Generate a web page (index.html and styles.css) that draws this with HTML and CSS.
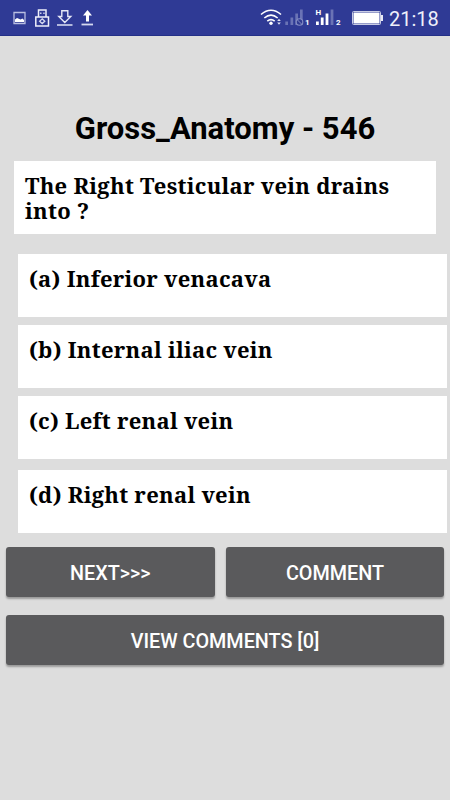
FILE: index.html
```html
<!DOCTYPE html>
<html lang="en">
<head>
<meta charset="utf-8">
<title>Gross Anatomy</title>
<link rel="stylesheet" href="styles.css">
</head>
<body>
<header class="status">
  <svg class="tray" width="100" height="36" viewBox="0 0 100 36" fill="none">
    <path d="M14 12.500H25V23.500H14Z" stroke="#b9bee1" stroke-width="1.3"/>
    <path d="M15 22V19.500L17 18L20.500 19.500L22.500 18.500L24 20V22Z" fill="#fff"/>
    <path d="M38.500 17V10H46V17M35.800 17H48.500V26H35.800Z" stroke="#eef0fa" stroke-width="1.5"/>
    <path d="M40 13.200H41.500M43.200 13.200H44.700" stroke="#c5caea" stroke-width="1.5"/>
    <path d="M42.200 18.800L44.800 21.200L42.200 23.600L39.600 21.200Z" stroke="#d5d8ef" stroke-width="1.3"/>
    <path d="M61.800 10.700H67.800V16.500H70.800L64.800 22.500L58.800 16.500H61.800Z" stroke="#e6e8f6" stroke-width="1.4"/>
    <path d="M57 25H72.500" stroke="#d5d8ef" stroke-width="1.6"/>
    <path d="M87.500 10L92 15.500H89V21.500H86V15.500H83Z" fill="#fff"/>
    <path d="M81.500 24.500H93" stroke="#d5d8ef" stroke-width="1.8"/>
  </svg>
  <div class="system">
    <svg width="125" height="36" viewBox="260 0 125 36" fill="none">
      <path d="M261 14.500Q271 6 281 14.500M264.300 18Q271 12.400 277.700 18M267.300 21.200Q271 18.200 274.700 21.200" stroke="#fff" stroke-width="1.6"/>
      <circle cx="271" cy="23.300" r="1.700" fill="#fff"/>
      <path d="M277.200 21L279 18.800L280.800 21ZM277.200 22.500L279 24.700L280.800 22.500Z" fill="#dfe2f3"/>
      <path d="M285.300 21.500H288V25H285.300ZM290.500 17.500H293.200V25H290.500ZM295.300 13.500H298V25H295.300ZM300 9.500H302.700V25H300Z" fill="#6a73b5"/>
      <circle cx="299.500" cy="22" r="3.300" fill="#303b92" stroke="#858dc4" stroke-width="1.100"/>
      <path d="M297.500 20L301.500 24" stroke="#858dc4"/>
      <path d="M316 21.500H318.800V25H316ZM320.800 17.500H323.600V25H320.800ZM325.600 13.500H328.400V25H325.600Z" fill="#fff"/>
      <path d="M330.600 9.500H333.400V25H330.600Z" fill="#6a73b5"/>
      <text class="sim" x="305" y="25">1</text>
      <text class="sim" x="336" y="25">2</text>
      <text class="sim" x="315.500" y="14.500">H</text>
      <rect x="352.500" y="11.500" width="28" height="13" rx="1" stroke="#c9cce5"/>
      <rect x="353.500" y="12.500" width="26" height="11" fill="#fff"/>
      <path d="M381 15H383V21H381Z" fill="#e9eaf5"/>
    </svg>
    <span class="clock">21:18</span>
  </div>
</header>
<main>
  <h1>Gross_Anatomy - 546</h1>
  <p class="card question">The Right Testicular vein drains into ?</p>
  <div class="answers">
    <div class="card answer">(a) Inferior venacava</div>
    <div class="card answer">(b) Internal iliac vein</div>
    <div class="card answer">(c) Left renal vein</div>
    <div class="card answer last">(d) Right renal vein</div>
  </div>
  <div class="actions">
    <button class="next">NEXT&gt;&gt;&gt;</button>
    <button class="comment">COMMENT</button>
    <button class="view">VIEW COMMENTS [0]</button>
  </div>
</main>
</body>
</html>
```
FILE: styles.css
```css
* { box-sizing: border-box; }
body { margin: 0; height: 800px; overflow: hidden; background: #ddd; font-family: Roboto, sans-serif; }
.status { height: 36px; display: flex; justify-content: space-between; background: #2f3a95; border-bottom: 1px solid #233087; }
.status svg { display: block; }
.system { display: flex; width: 190px; color: #fff; }
.clock { font-size: 20px; line-height: 38px; margin-left: 4px; color: #eef0fa; }
.sim { font: bold 8px Roboto, sans-serif; fill: #fff; }
h1 { margin: 72px 0 0; height: 53px; line-height: 41px; font-size: 31px; font-weight: 700; text-align: center; color: #000; white-space: nowrap; }
.card { background: #fff; color: #000; font-family: "Noto Serif", "Droid Serif", "DejaVu Serif", serif; font-weight: 700; font-size: 22px; letter-spacing: .27px; line-height: 25px; }
.question { margin: 0 14px; height: 73px; padding: 12px 11px; }
.answers { margin: 20px 3px 0 18px; display: grid; gap: 8px; }
.answer { height: 63px; padding: 12px 11px; }
.last { margin-top: 3px; }
.actions { margin: 14px 6px 0; display: grid; grid-template-columns: 208.500px 1fr; gap: 17.500px 11.500px; }
button { height: 50px; padding: 2px 0 0; border: 0; border-radius: 3px; background: #5a5a5c; box-shadow: 0 2px 2px rgba(0,0,0,.3); color: #fff; font: 500 19.800px Roboto, sans-serif; }
.view { grid-column: 1 / 3; padding-top: 3px; }
```
